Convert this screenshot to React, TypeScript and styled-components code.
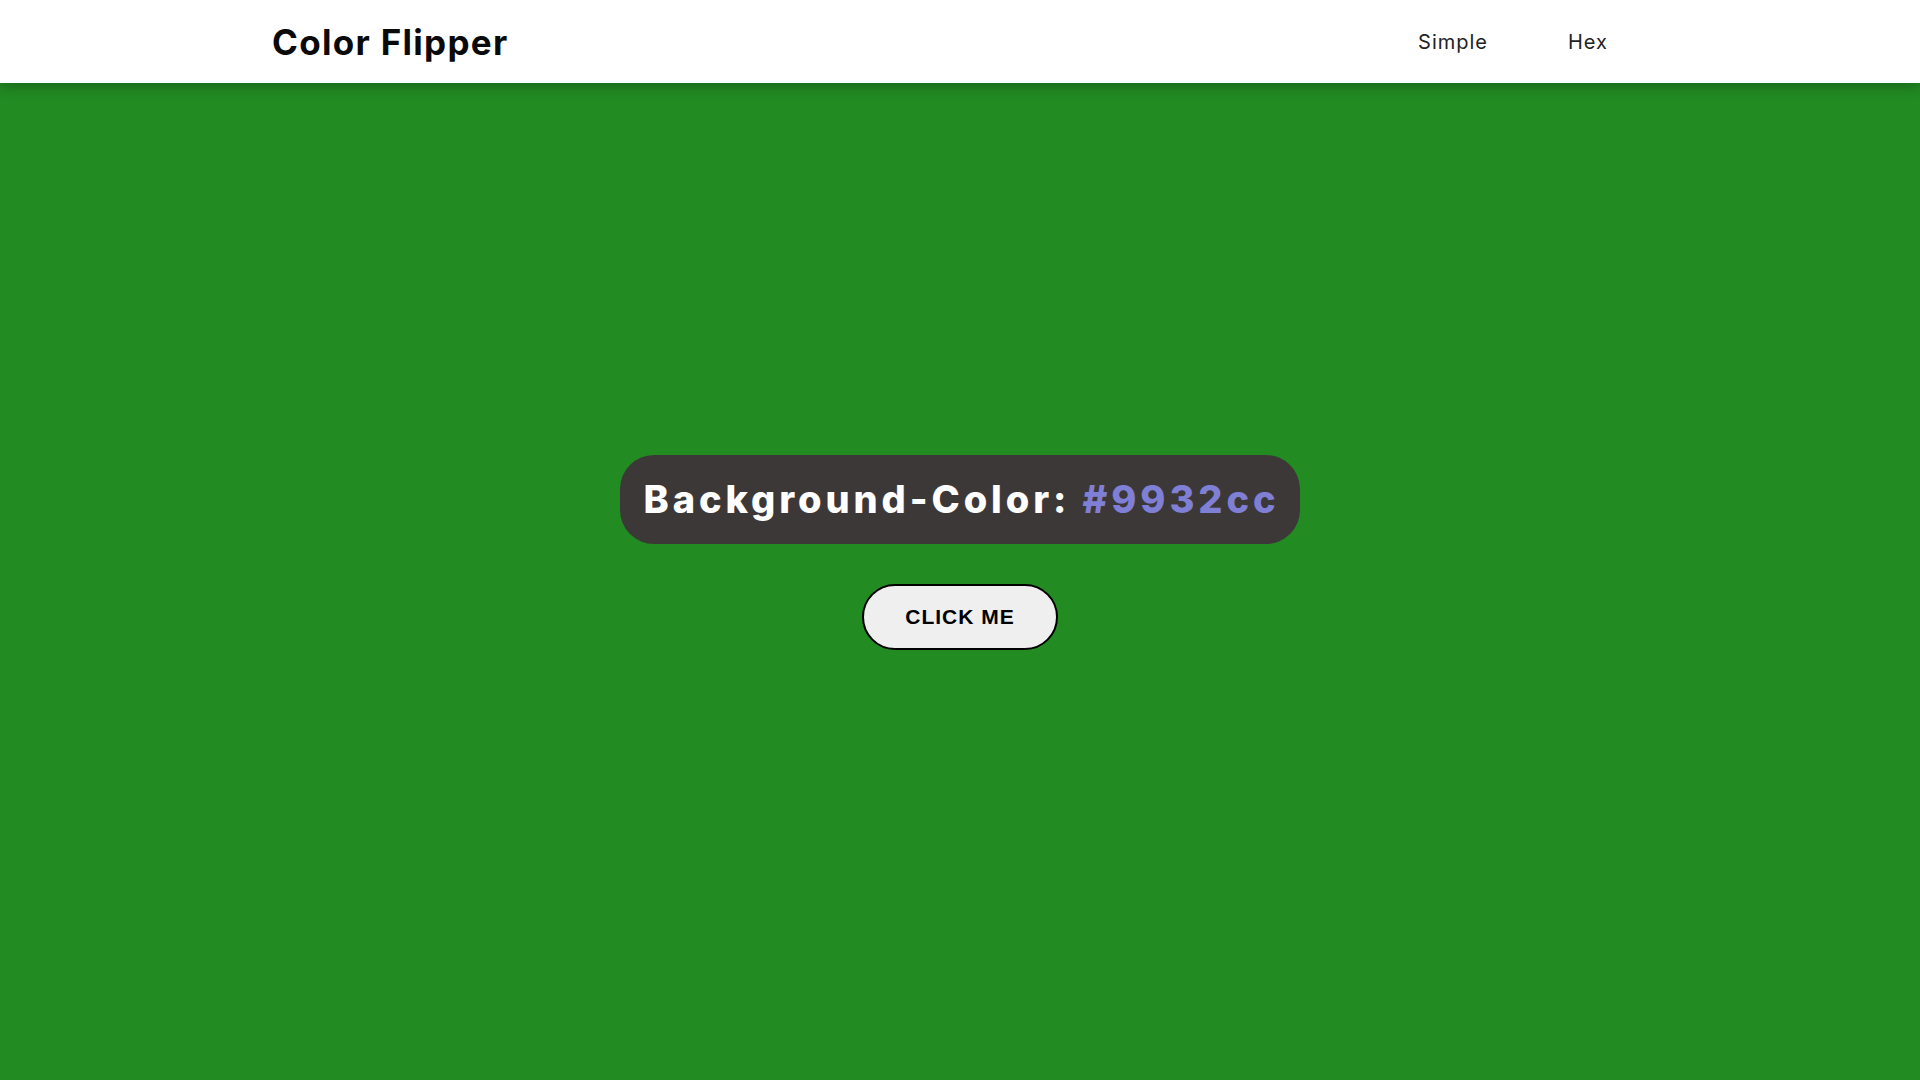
import React, { useState } from "react";
import styled, { createGlobalStyle } from "styled-components";

const colors = ["#9932cc", "#228b22", "#f15025", "#4a90e2", "#e2b04a"];

const GlobalStyle = createGlobalStyle`
  * {
    box-sizing: border-box;
  }
  body {
    margin: 0;
    background: #228b22;
    font-family: "Inter", "Noto Sans", sans-serif;
  }
`;

export default function App() {
  const [index, setIndex] = useState(0);

  return (
    <>
      <GlobalStyle />
      <Nav>
        <Logo>Color Flipper</Logo>
        <Links>
          <li>
            <NavLink href="#">Simple</NavLink>
          </li>
          <li>
            <NavLink href="#">Hex</NavLink>
          </li>
        </Links>
      </Nav>
      <Main>
        <Heading>
          Background-Color: <HexValue>{colors[index]}</HexValue>
        </Heading>
        <HeroButton onClick={() => setIndex((index + 1) % colors.length)}>
          Click Me
        </HeroButton>
      </Main>
    </>
  );
}

const Nav = styled.nav`
  position: relative;
  z-index: 1;
  display: flex;
  align-items: center;
  justify-content: space-between;
  height: 83px;
  padding: 0 272px;
  background: #ffffff;
  box-shadow: 0 4px 12px rgba(0, 0, 0, 0.25);
`;

const Logo = styled.h4`
  margin: 0;
  font-size: 35px;
  font-weight: 700;
  color: #0a0a0a;
  letter-spacing: 1.3px;
`;

const Links = styled.ul`
  display: flex;
  margin: 0;
  padding: 0;
  list-style: none;
`;

const NavLink = styled.a`
  display: block;
  margin: 0 40px;
  font-size: 20px;
  color: #222222;
  letter-spacing: 1px;
  text-decoration: none;
`;

const Main = styled.main`
  display: flex;
  flex-direction: column;
  align-items: center;
  justify-content: center;
  gap: 40px;
  min-height: calc(100vh - 83px);
  padding-bottom: 58px;
`;

const Heading = styled.h2`
  margin: 0;
  padding: 21px 21px 21px 24px;
  border-radius: 34px;
  background: #3d3838;
  color: #ffffff;
  font-size: 38px;
  font-weight: 800;
  line-height: 47px;
  letter-spacing: 3.9px;
  white-space: nowrap;
`;

const HexValue = styled.span`
  color: #7f7fd6;
`;

const HeroButton = styled.button`
  height: 66px;
  padding: 0 41px;
  border: 2px solid #000000;
  border-radius: 33px;
  background: #efefef;
  color: #000000;
  font-family: "Liberation Sans", Arial, sans-serif;
  font-size: 21px;
  font-weight: 700;
  letter-spacing: 1px;
  text-transform: uppercase;
  cursor: pointer;
`;
